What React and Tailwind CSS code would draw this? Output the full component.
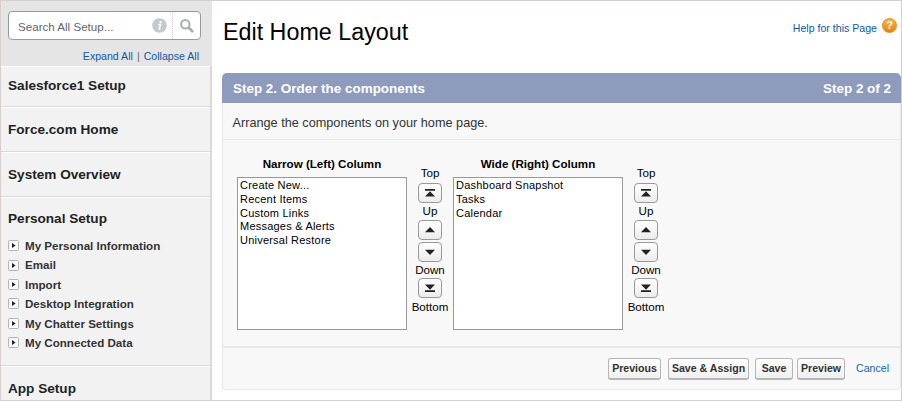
import React from 'react';

const SECTIONS = [
  { title: 'Salesforce1 Setup', height: 'h-[41px] pt-[12px]' },
  { title: 'Force.com Home', height: 'h-[45px] pt-[15px]' },
  { title: 'System Overview', height: 'h-[45px] pt-[15px]' },
  {
    title: 'Personal Setup',
    height: 'h-[169px] pt-[14px]',
    items: [
      'My Personal Information',
      'Email',
      'Import',
      'Desktop Integration',
      'My Chatter Settings',
      'My Connected Data'
    ]
  },
  { title: 'App Setup', height: 'h-[40px] pt-[15px]' }
];

const COLUMNS = [
  {
    title: 'Narrow (Left) Column',
    options: ['Create New...', 'Recent Items', 'Custom Links', 'Messages & Alerts', 'Universal Restore']
  },
  {
    title: 'Wide (Right) Column',
    options: ['Dashboard Snapshot', 'Tasks', 'Calendar']
  }
];

const ACTIONS = [
  { label: 'Previous', style: 'w-[53px] mr-[7px]' },
  { label: 'Save & Assign', style: 'w-[81px] mr-[6px]' },
  { label: 'Save', style: 'w-[38px] mr-[4px]' },
  { label: 'Preview', style: 'w-[48px] mr-[11px]' }
];

const ARROWS = {
  top: <path d="M1 1h10v1.7H1zM6 3.2 11 8.6H1z" />,
  up: <path d="M6 2 11 7.2H1z" />,
  down: <path d="M6 8 11 2.8H1z" />,
  bottom: <path d="M1 7.3h10V9H1zM6 6.8 11 1.4H1z" />
};

const ArrowButton = ({ type }) => (
  <button className="flex h-5 w-6 shrink-0 items-center justify-center rounded-[4px] border border-[#999] bg-linear-to-b from-white to-[#ececec]">
    <svg viewBox="0 0 12 10" className="h-[10px] w-3 shrink-0 fill-[#222]">{ARROWS[type]}</svg>
  </button>
);

const Sidebar = () => (
  <aside className="flex w-[211px] shrink-0 flex-col">
    <div className="h-[65px] shrink-0 bg-[#e5e5e5] pt-[10px] pl-[7px]">
      <div className="flex h-[29px] w-[193px] items-center rounded-[4px] border border-[#999] bg-white">
        <span className="w-[143px] shrink-0 pt-[2px] pl-[9px] text-[11.6px] text-[#666]">Search All Setup...</span>
        <svg viewBox="0 0 15 15" className="h-[15px] w-[15px] shrink-0">
          <circle cx="7.5" cy="7.5" r="7.3" fill="#c6c9cb" />
          <circle cx="8.5" cy="4.1" r="1.2" fill="#fff" />
          <path d="M6.3 6.6h2.1L7.3 11h1.2" fill="none" stroke="#fff" strokeWidth="1.5" />
        </svg>
        <span className="ml-[5px] h-full border-l border-dotted border-[#ccc]" />
        <svg viewBox="0 0 16 16" className="ml-[6px] h-4 w-4 shrink-0">
          <circle cx="6.3" cy="6.3" r="4.2" fill="none" stroke="#aaadaf" strokeWidth="2" />
          <path d="M9.5 9.5 14 14" stroke="#aaadaf" strokeWidth="2.6" />
        </svg>
      </div>
      <div className="mt-[9px] flex w-[191px] justify-end text-[10.6px] leading-[14px] text-[#1058a5]">
        <a>Expand All</a>
        <span className="mx-[4px] text-[#667]">|</span>
        <a>Collapse All</a>
      </div>
    </div>

    {SECTIONS.map(section => (
      <section
        key={section.title}
        className={`${section.height} shrink-0 border-r-2 border-b border-[#dadada] bg-[#f2f2f2] pl-[7px] shadow-[inset_0_1px_0_#fff]`}
      >
        <h2 className="text-[13.6px] leading-4 font-bold text-[#222]">{section.title}</h2>
        {section.items && (
          <ul className="mt-[9px]">
            {section.items.map(item => (
              <li key={item} className="flex h-[19.4px] items-center text-[11.6px] font-bold text-[#333]">
                <svg viewBox="0 0 11 11" className="mr-[6px] h-[11px] w-[11px]">
                  <rect x=".5" y=".5" width="10" height="10" rx="1" fill="#fafafa" stroke="#b4b4b4" />
                  <path d="M4 3v5l3.6-2.5z" fill="#222" />
                </svg>
                {item}
              </li>
            ))}
          </ul>
        )}
      </section>
    ))}
  </aside>
);

const OrderColumn = ({ title, options }) => (
  <div className="flex w-[216px]">
    <div className="w-[170px]">
      <h3 className="mb-[6px] text-center text-[11.6px] leading-[14px] font-bold text-black">{title}</h3>
      <ul className="h-[153px] border border-[#999] bg-white pt-px pl-[2px] text-[11px] leading-[13.8px] tracking-[.22px] text-black">
        {options.map(option => (
          <li key={option}>{option}</li>
        ))}
      </ul>
    </div>
    <div className="flex w-[46px] flex-col items-center pt-[9px] text-[11.6px] leading-[14px] text-black">
      <span className="mb-[3px]">Top</span>
      <ArrowButton type="top" />
      <span className="mt-px mb-[2px]">Up</span>
      <ArrowButton type="up" />
      <span className="h-[2px]" />
      <ArrowButton type="down" />
      <span className="mt-px mb-px">Down</span>
      <ArrowButton type="bottom" />
      <span className="mt-[2px]">Bottom</span>
    </div>
  </div>
);

const App = () => {
  return (
    <div className="flex h-[401px] w-[902px] overflow-hidden border border-[#d9cece] bg-white font-['Liberation_Sans',Arial,sans-serif]">
      <Sidebar />

      <main className="flex min-w-0 flex-1 flex-col pl-[10px]">
        <header className="flex h-[72px] shrink-0 justify-between pr-[4px]">
          <h1 className="pt-[16px] pl-px text-[23.3px] leading-[30px] text-black">Edit Home Layout</h1>
          <div className="flex items-start gap-[5px] pt-[17px] text-[10.6px] leading-[15px] text-[#1058a5]">
            <a className="pt-[3px]">Help for this Page</a>
            <span className="flex h-[15px] w-[15px] items-center justify-center rounded-full border border-[#d98a1a] bg-linear-to-b from-[#f8b64c] to-[#e58300] text-[11px] font-bold text-white">
              ?
            </span>
          </div>
        </header>

        <div className="flex h-[30px] shrink-0 items-center justify-between rounded-t-[5px] bg-[#8e9bbd] pt-[2px] pr-[10px] pl-[11px] text-[13.45px] font-bold text-white">
          <span>Step 2. Order the components</span>
          <span>Step 2 of 2</span>
        </div>

        <div className="h-[287px] shrink-0 rounded-b-[4px] border border-t-0 border-[#e8e8e8] bg-[#f8f8f8]">
          <p className="h-[37px] border-b border-[#e8e8e8] pt-[12px] pl-[9.5px] text-[12.7px] leading-4 text-[#333]">
            Arrange the components on your home page.
          </p>

          <div className="flex h-[208px] border-b-2 border-[#e8e8e8] pt-[17px] pl-[14px]">
            {COLUMNS.map(column => (
              <OrderColumn key={column.title} title={column.title} options={column.options} />
            ))}
          </div>

          <div className="flex items-center justify-end pt-[10px] pr-[11px] text-[10.6px]">
            {ACTIONS.map(action => (
              <button
                key={action.label}
                className={`${action.style} h-[22px] shrink-0 rounded-[3px] border border-b-2 border-[#b5b5b5] bg-linear-to-b from-white to-[#f0f0f0] font-bold whitespace-nowrap text-[#333]`}
              >
                {action.label}
              </button>
            ))}
            <a className="text-[#1565b0]">Cancel</a>
          </div>
        </div>
      </main>
    </div>
  );
};

export default App;
